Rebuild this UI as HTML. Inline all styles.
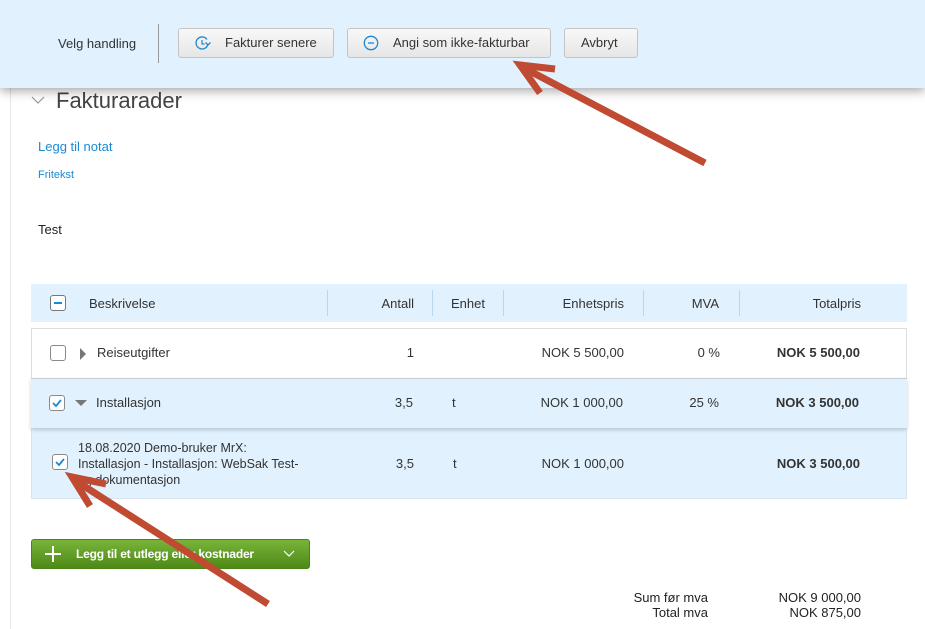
<!DOCTYPE html>
<html><head><meta charset="utf-8">
<style>
*{box-sizing:border-box;margin:0;padding:0}
body{width:925px;height:629px;overflow:hidden;background:#fff;font-family:"Liberation Sans",sans-serif;font-size:13px;color:#333;position:relative}
.abs{position:absolute}
.top{left:0;top:0;width:925px;height:88px;background:#e1f1fd;box-shadow:0 3px 10px rgba(0,0,0,.35);z-index:5}
.btn{position:absolute;top:28px;height:30px;border:1px solid #c4c4c4;border-radius:3px;background:linear-gradient(#f8f8f8,#e6e6e6);font-size:13px;line-height:28px;color:#333}
.r{text-align:right}
.row{position:absolute;left:31px;width:876px}
.cb{position:absolute;width:16px;height:16px;border:1px solid #8a8a8a;border-radius:3px;background:#fff}
.cb svg{position:absolute;left:1px;top:1px}
</style></head><body>
<div class="abs" style="left:10px;top:88px;width:1px;height:541px;background:#e6e6e6"></div>
<div class="abs top">
  <div class="abs" style="left:58px;top:36px">Velg handling</div>
  <div class="abs" style="left:158px;top:24px;width:1px;height:39px;background:#999"></div>
  <div class="btn" style="left:178px;width:156px">
    <svg class="abs" style="left:15px;top:6px" width="18" height="16" viewBox="0 0 18 16"><path d="M13 4.5A6 6 0 1 0 14 9" fill="none" stroke="#1a8ad4" stroke-width="1.3"/><path d="M11.5 7.5l2.5 2.5 2.5-2.5" fill="none" stroke="#1a8ad4" stroke-width="1.3"/><path d="M8 5v4h2.5" fill="none" stroke="#1a8ad4" stroke-width="1.2"/></svg>
    <span class="abs" style="left:46px">Fakturer senere</span></div>
  <div class="btn" style="left:347px;width:204px">
    <svg class="abs" style="left:15px;top:6px" width="16" height="16" viewBox="0 0 16 16"><circle cx="8" cy="8" r="6.7" fill="none" stroke="#1a8ad4" stroke-width="1.3"/><path d="M5 8h6" stroke="#1a8ad4" stroke-width="1.3"/></svg>
    <span class="abs" style="left:45px">Angi som ikke-fakturbar</span></div>
  <div class="btn" style="left:564px;width:74px"><span class="abs" style="left:16px">Avbryt</span></div>
</div>
<svg class="abs" style="left:31px;top:95px" width="14" height="10"><path d="M1 2l6 6 6-6" fill="none" stroke="#999" stroke-width="1.2"/></svg>
<div class="abs" style="left:56px;top:88px;font-size:22px;color:#444">Fakturarader</div>
<div class="abs" style="left:38px;top:139px;color:#1a8ad4">Legg til notat</div>
<div class="abs" style="left:38px;top:169px;font-size:11px;color:#1a8ad4">Fritekst</div>
<div class="abs" style="left:38px;top:222px;color:#222">Test</div>

<div class="row" style="top:284px;height:38px;background:#e1f1fd">
  <div class="cb" style="left:19px;top:11px;border-color:#777"><svg width="12" height="12"><path d="M2 6h8" stroke="#1a8ad4" stroke-width="2"/></svg></div>
  <div class="abs" style="left:58px;top:12px">Beskrivelse</div>
  <div class="abs" style="left:296px;top:6px;width:1px;height:26px;background:#b6d9f2"></div>
  <div class="abs r" style="left:300px;width:83px;top:12px">Antall</div>
  <div class="abs" style="left:401px;top:6px;width:1px;height:26px;background:#b6d9f2"></div>
  <div class="abs" style="left:420px;top:12px">Enhet</div>
  <div class="abs" style="left:472px;top:6px;width:1px;height:26px;background:#b6d9f2"></div>
  <div class="abs r" style="left:480px;width:113px;top:12px">Enhetspris</div>
  <div class="abs" style="left:612px;top:6px;width:1px;height:26px;background:#b6d9f2"></div>
  <div class="abs r" style="left:620px;width:68px;top:12px">MVA</div>
  <div class="abs" style="left:708px;top:6px;width:1px;height:26px;background:#b6d9f2"></div>
  <div class="abs r" style="left:720px;width:110px;top:12px">Totalpris</div>
</div>

<div class="row" style="top:328px;height:50px;border:1px solid #ddd;border-bottom:none;background:#fff">
  <div class="cb" style="left:18px;top:16px"></div>
  <svg class="abs" style="left:47px;top:19px" width="8" height="12"><path d="M1 0l6 6-6 6z" fill="#777"/></svg>
  <div class="abs" style="left:65px;top:16px">Reiseutgifter</div>
  <div class="abs r" style="left:300px;width:82px;top:16px">1</div>
  <div class="abs r" style="left:480px;width:112px;top:16px">NOK 5 500,00</div>
  <div class="abs r" style="left:620px;width:68px;top:16px">0 %</div>
  <div class="abs r" style="left:720px;width:108px;top:16px;font-weight:bold">NOK 5 500,00</div>
</div>
<div class="row" style="top:378px;height:50px;background:#e1f1fd;border-top:1px solid #ccc;box-shadow:0 2px 4px rgba(0,0,0,.18);z-index:2">
  <div class="cb" style="left:18px;top:16px"><svg width="12" height="12"><path d="M2 6l3 3 5-6" fill="none" stroke="#1a8ad4" stroke-width="1.8"/></svg></div>
  <svg class="abs" style="left:44px;top:20px" width="12" height="8"><path d="M0 1h12l-6 6z" fill="#777"/></svg>
  <div class="abs" style="left:65px;top:16px">Installasjon</div>
  <div class="abs r" style="left:300px;width:82px;top:16px">3,5</div>
  <div class="abs" style="left:421px;top:16px">t</div>
  <div class="abs r" style="left:480px;width:112px;top:16px">NOK 1 000,00</div>
  <div class="abs r" style="left:620px;width:68px;top:16px">25 %</div>
  <div class="abs r" style="left:720px;width:108px;top:16px;font-weight:bold">NOK 3 500,00</div>
</div>
<div class="row" style="top:428px;height:71px;background:#e1f1fd;border:1px solid #d6e4ee;border-top:none">
  <div class="cb" style="left:20px;top:26px"><svg width="12" height="12"><path d="M2 6l3 3 5-6" fill="none" stroke="#1a8ad4" stroke-width="1.8"/></svg></div>
  <div class="abs" style="left:46px;top:12px;line-height:16px;width:300px;white-space:nowrap;font-size:12.5px">18.08.2020 Demo-bruker MrX:<br>Installasjon - Installasjon: WebSak Test-<br>og dokumentasjon</div>
  <div class="abs r" style="left:300px;width:82px;top:28px">3,5</div>
  <div class="abs" style="left:421px;top:28px">t</div>
  <div class="abs r" style="left:480px;width:112px;top:28px">NOK 1 000,00</div>
  <div class="abs r" style="left:720px;width:108px;top:28px;font-weight:bold">NOK 3 500,00</div>
</div>

<div class="abs" style="left:31px;top:539px;width:279px;height:30px;border-radius:3px;background:linear-gradient(#79b43a,#4d8a16);border:1px solid #4a8317;color:#fff;font-weight:bold;font-size:12px">
  <svg class="abs" style="left:12px;top:5px" width="18" height="18"><path d="M9 1v16M1 9h16" stroke="#fff" stroke-width="2"/></svg>
  <span class="abs" style="left:44px;top:7px;letter-spacing:-0.2px">Legg til et utlegg eller kostnader</span>
  <svg class="abs" style="left:251px;top:10px" width="12" height="8"><path d="M1 1l5 5 5-5" fill="none" stroke="#fff" stroke-width="1.2"/></svg>
</div>
<div class="abs r" style="left:600px;width:108px;top:590px;color:#222">Sum før mva</div>
<div class="abs r" style="left:740px;width:121px;top:590px;color:#222">NOK 9 000,00</div>
<div class="abs r" style="left:600px;width:108px;top:605px;color:#222">Total mva</div>
<div class="abs r" style="left:740px;width:121px;top:605px;color:#222">NOK 875,00</div>

<svg class="abs" style="left:0;top:0;z-index:10" width="925" height="629">
  <g stroke="#c04a32" stroke-width="7" fill="none" stroke-linecap="butt">
    <line x1="705" y1="163" x2="524" y2="68"/>
    <polyline points="555,69 520,65 540,93"/>
    <line x1="268" y1="604" x2="76" y2="481"/>
    <polyline points="106,484 72,477 90,506"/>
  </g>
</svg>
</body></html>
